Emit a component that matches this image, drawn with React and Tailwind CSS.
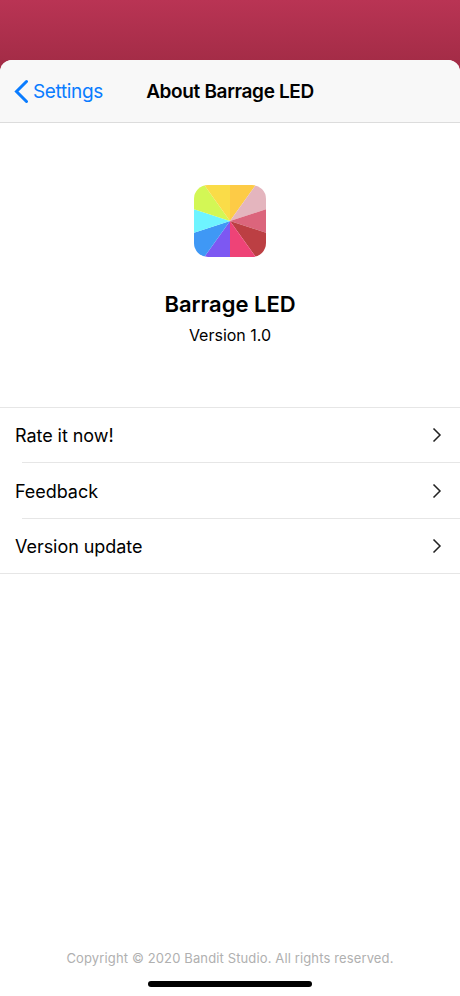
const wedges = [
  { fill: '#fdcb46', points: '36,36 36,-20 76,-20' },
  { fill: '#e4b5be', points: '36,36 76,-20 110,12' },
  { fill: '#db657c', points: '36,36 110,12 110,60' },
  { fill: '#bc3f43', points: '36,36 110,60 76,92' },
  { fill: '#ee4377', points: '36,36 76,92 36,92' },
  { fill: '#7d58f2', points: '36,36 36,92 -4,92' },
  { fill: '#3f98f5', points: '36,36 -4,92 -38,60' },
  { fill: '#6ef4ff', points: '36,36 -38,60 -38,12' },
  { fill: '#d3f755', points: '36,36 -38,12 -4,-20' },
  { fill: '#fadc48', points: '36,36 -4,-20 36,-20' },
];

const rows = ['Rate it now!', 'Feedback', 'Version update'];

const AppIcon = () => (
  <svg className="h-[72px] w-[72px] rounded-[14px]" viewBox="0 0 72 72">
    {wedges.map((wedge) => (
      <polygon key={wedge.fill} points={wedge.points} fill={wedge.fill} />
    ))}
  </svg>
);

const App = () => {
  return (
    <div className="flex h-[996px] w-[460px] flex-col overflow-hidden bg-linear-to-b from-[#b93454] to-[#a12b45] to-[70px] pt-[60px] font-['Inter','Liberation_Sans',sans-serif] text-black">
      <div className="flex flex-1 flex-col overflow-hidden rounded-t-[12px] bg-white">
        <header className="grid h-[63px] grid-cols-[146px_168px_146px] items-center border-b border-[#dcdcdc] bg-[#f8f8f8]">
          <button className="flex items-center pl-[14px] text-[#0a7cff]">
            <svg className="h-6 w-[15px]" viewBox="0 0 15 24" fill="none" stroke="currentColor" strokeWidth="3" strokeLinecap="round">
              <path d="M12.5 2.5 2.5 12.5l10 10" />
            </svg>
            <span className="ml-1 pt-[2px] text-[19px] tracking-[-0.35px]">Settings</span>
          </button>
          <h1 className="pt-[2px] text-center text-[19px] font-semibold tracking-[-0.35px] whitespace-nowrap">About Barrage LED</h1>
        </header>

        <section className="flex h-[284px] flex-col items-center pt-[62px]">
          <AppIcon />
          <h2 className="mt-8 text-[22px] leading-[30px] font-semibold">Barrage LED</h2>
          <p className="mt-1 text-[16px] leading-6">Version 1.0</p>
        </section>

        <ul className="border-y border-[#e6e6e6]">
          {rows.map((row, index) => (
            <li key={row}>
              {index > 0 && <div className="ml-[22px] h-px bg-[#e6e6e6]" />}
              <div className="flex h-[54.4px] items-center justify-between pr-[18px] pl-[15px]">
                <span className="pt-px text-[18px] tracking-[-0.05px]">{row}</span>
                <svg className="h-[14px] w-[10px]" viewBox="0 0 10 14" fill="none" stroke="#222" strokeWidth="1.5">
                  <path d="m1.5.5 6.5 6.5-6.5 6.5" />
                </svg>
              </div>
            </li>
          ))}
        </ul>

        <footer className="mt-auto flex flex-col items-center pb-[9px]">
          <p className="text-[13px] leading-5 tracking-[0.13px] text-[#b0b0b0]">Copyright © 2020 Bandit Studio. All rights reserved.</p>
          <div className="mt-[13px] h-[6px] w-[164px] rounded-full bg-black" />
        </footer>
      </div>
    </div>
  );
};

export default App;
